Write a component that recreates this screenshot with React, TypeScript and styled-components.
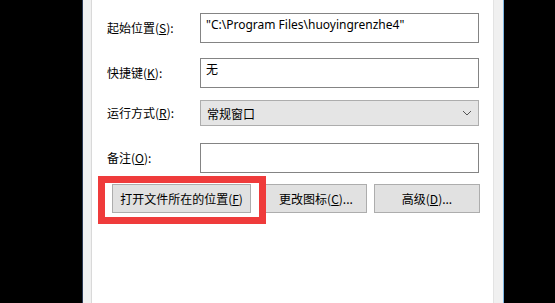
import React from 'react';
import styled, { createGlobalStyle } from 'styled-components';

const Global = createGlobalStyle`
  html, body {
    margin: 0;
    padding: 0;
    background: #000;
  }
  body {
    width: 555px;
    height: 303px;
    overflow: hidden;
    font-family: "Noto Sans", "Noto Sans CJK SC", sans-serif;
    font-size: 12px;
    color: #000;
  }
`;

const Screen = styled.div`
  display: flex;
  height: 303px;
`;

const Backdrop = styled.div<{ $w: number }>`
  width: ${(p) => p.$w}px;
  flex: none;
  background: #000;
`;

const Strip = styled.div<{ $w: number; $side: 'left' | 'right' }>`
  width: ${(p) => p.$w}px;
  flex: none;
  background: #f0f0f0;
  ${(p) =>
    p.$side === 'left'
      ? 'border-left: 1px solid #2b3a55; border-right: 1px solid #d9d9d9;'
      : 'border-left: 1px solid #e3e3e3; border-right: 1px solid #7fb7e2;'}
`;

const Panel = styled.div`
  position: relative;
  flex: 1;
  background: #fff;
  padding: 13px 13px 0 15px;
`;

const Row = styled.div<{ $gap: number }>`
  display: grid;
  grid-template-columns: 93px 279px;
  align-items: center;
  margin-bottom: ${(p) => p.$gap}px;
`;

const Label = styled.div`
  white-space: nowrap;
  font-family: "Noto Sans CJK SC", sans-serif;
  font-size: 12px;
  line-height: 16px;
`;

const Field = styled.div<{ $h: number }>`
  box-sizing: border-box;
  height: ${(p) => p.$h}px;
  border: 1px solid #848484;
  background: #fff;
  padding: 3px 5px;
  font-family: "Noto Sans", "Noto Sans CJK SC", sans-serif;
  font-size: 12px;
  line-height: 16px;
  white-space: nowrap;
`;

const Select = styled.div`
  box-sizing: border-box;
  height: 26px;
  border: 1px solid #adadad;
  background: #e5e5e5;
  display: flex;
  align-items: center;
  justify-content: space-between;
  padding: 0 6px 0 6px;
  font-family: "Noto Sans CJK SC", sans-serif;
  font-size: 12px;
`;

const Buttons = styled.div`
  display: flex;
  padding-left: 5px;
`;

const Button = styled.div<{ $w: number; $gap: number }>`
  box-sizing: border-box;
  width: ${(p) => p.$w}px;
  height: 29px;
  margin-right: ${(p) => p.$gap}px;
  border: 1px solid #adadad;
  background: #e1e1e1;
  display: flex;
  align-items: center;
  justify-content: center;
  font-family: "Noto Sans CJK SC", sans-serif;
  font-size: 12px;
  white-space: nowrap;
`;

const Highlight = styled.div`
  position: absolute;
  left: 6px;
  top: 176px;
  width: 168px;
  height: 48px;
  box-sizing: border-box;
  border: 7px solid #ef3b3b;
  pointer-events: none;
`;

const Chevron = () => (
  <svg width="10" height="6" viewBox="0 0 10 6">
    <path d="M1 1 L5 5 L9 1" fill="none" stroke="#555" strokeWidth="1" />
  </svg>
);

export default function App() {
  return (
    <>
      <Global />
      <Screen>
        <Backdrop $w={82} />
        <Strip $w={8} $side="left" />
        <Panel>
          <Row $gap={15}>
            <Label>
              起始位置(<u>S</u>):
            </Label>
            <Field $h={30}>"C:\Program Files\huoyingrenzhe4"</Field>
          </Row>
          <Row $gap={12}>
            <Label>
              快捷键(<u>K</u>):
            </Label>
            <Field $h={30}>无</Field>
          </Row>
          <Row $gap={17}>
            <Label>
              运行方式(<u>R</u>):
            </Label>
            <Select>
              常规窗口
              <Chevron />
            </Select>
          </Row>
          <Row $gap={11}>
            <Label>
              备注(<u>O</u>):
            </Label>
            <Field $h={30} />
          </Row>
          <Buttons>
            <Button $w={139} $gap={14}>
              打开文件所在的位置(<u>F</u>)
            </Button>
            <Button $w={102} $gap={7}>
              更改图标(<u>C</u>)...
            </Button>
            <Button $w={106} $gap={0}>
              高级(<u>D</u>)...
            </Button>
          </Buttons>
          <Highlight />
        </Panel>
        <Strip $w={9} $side="right" />
        <Backdrop $w={52} />
      </Screen>
    </>
  );
}
